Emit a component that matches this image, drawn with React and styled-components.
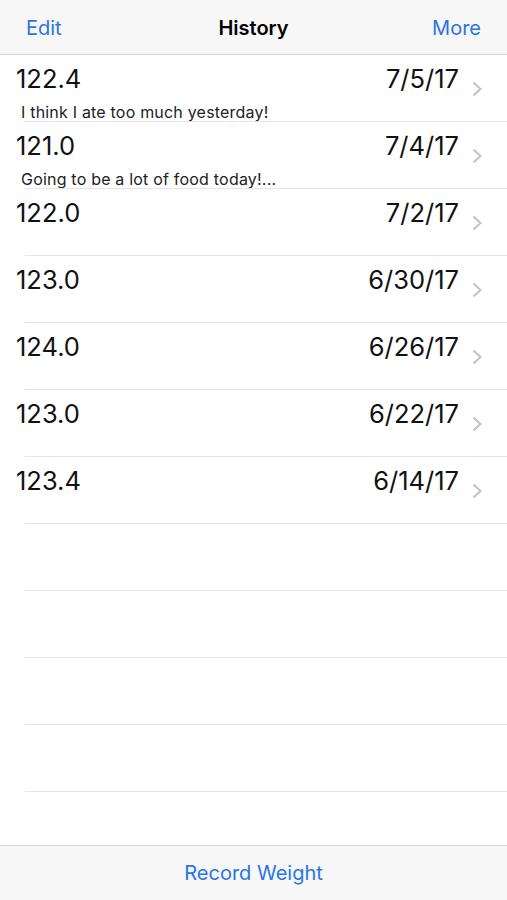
import styled, { createGlobalStyle } from 'styled-components';

const GlobalStyle = createGlobalStyle`
  html, body {
    margin: 0;
    padding: 0;
    background: #fff;
    font-family: Inter, "Noto Sans", sans-serif;
  }
`;

const entries = [
  { weight: '122.4', date: '7/5/17', note: 'I think I ate too much yesterday!' },
  { weight: '121.0', date: '7/4/17', note: 'Going to be a lot of food today!...' },
  { weight: '122.0', date: '7/2/17' },
  { weight: '123.0', date: '6/30/17' },
  { weight: '124.0', date: '6/26/17' },
  { weight: '123.0', date: '6/22/17' },
  { weight: '123.4', date: '6/14/17' },
];

const Screen = styled.div`
  width: 507px;
  height: 900px;
  display: flex;
  flex-direction: column;
  overflow: hidden;
`;

const NavBar = styled.header`
  height: 55px;
  flex-shrink: 0;
  background: #f7f7f7;
  border-bottom: 1px solid #d6d6d8;
  display: grid;
  grid-template-columns: 1fr auto 1fr;
  align-items: center;
  padding: 2px 26px 0;
  box-sizing: border-box;
`;

const NavButton = styled.span`
  color: #2a74e8;
  font-size: 20px;
  justify-self: ${(p) => (p.$right ? 'end' : 'start')};
`;

const Title = styled.span`
  font-size: 20px;
  font-weight: 600;
  color: #000;
`;

const List = styled.div`
  flex: 1;
  display: flex;
  flex-direction: column;
`;

const Row = styled.div`
  height: 67px;
  flex-shrink: 0;
  position: relative;
  display: grid;
  grid-template-columns: 1fr auto 48px;
  grid-template-rows: auto 1fr;
  padding: 8px 0 0 16px;
  box-sizing: border-box;

  &::after {
    content: '';
    position: absolute;
    left: 25px;
    right: 0;
    bottom: 0;
    height: 1px;
    background: #e4e4e6;
  }
`;

const Weight = styled.span`
  font-size: 25.5px;
  color: #111;
  line-height: 32px;
`;

const DateText = styled.span`
  font-size: 25.5px;
  color: #111;
  line-height: 32px;
  text-align: right;
`;

const Chevron = styled.span`
  grid-row: 1 / span 2;
  grid-column: 3;
  display: flex;
  align-items: center;
  padding-left: 13px;
  padding-bottom: 8px;
`;

const Note = styled.span`
  grid-column: 1 / span 2;
  font-size: 16px;
  letter-spacing: 0.2px;
  color: #222;
  padding-left: 5px;
  line-height: 20px;
  margin-top: 7px;
`;

const Toolbar = styled.footer`
  height: 55px;
  flex-shrink: 0;
  background: #f7f7f7;
  border-top: 1px solid #d6d6d8;
  display: flex;
  align-items: center;
  justify-content: center;
  color: #2a74e8;
  font-size: 20px;
  box-sizing: border-box;
`;

const ChevronIcon = () => (
  <svg width="11" height="16" viewBox="0 0 11 16">
    <path d="M1.5 1.5 L8.5 8 L1.5 14.5" fill="none" stroke="#c2c2c6" strokeWidth="2" />
  </svg>
);

export default function App() {
  return (
    <>
      <GlobalStyle />
      <Screen>
        <NavBar>
          <NavButton>Edit</NavButton>
          <Title>History</Title>
          <NavButton $right>More</NavButton>
        </NavBar>
        <List>
          {entries.map((e, i) => (
            <Row key={i}>
              <Weight>{e.weight}</Weight>
              <DateText>{e.date}</DateText>
              <Chevron>
                <ChevronIcon />
              </Chevron>
              {e.note && <Note>{e.note}</Note>}
            </Row>
          ))}
          {[0, 1, 2, 3].map((i) => (
            <Row key={'e' + i} />
          ))}
        </List>
        <Toolbar>Record Weight</Toolbar>
      </Screen>
    </>
  );
}
